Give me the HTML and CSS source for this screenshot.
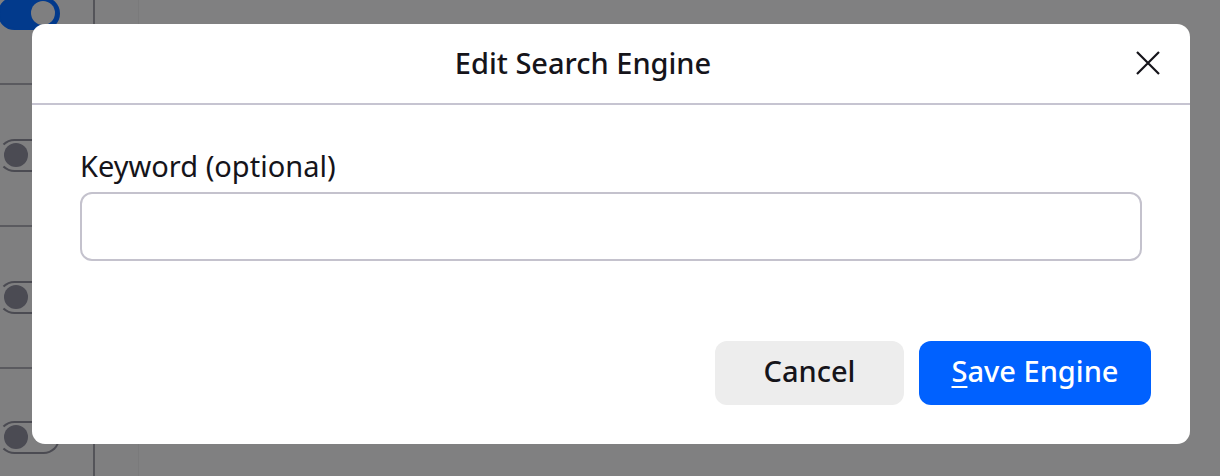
FILE: index.html
```html
<!DOCTYPE html>
<html>
<head>
<meta charset="utf-8">
<link rel="stylesheet" href="styles.css">
</head>
<body>
<div class="page">
  <div class="toggles">
    <div class="row"><span class="toggle on"><span class="knob"></span></span></div>
    <div class="row"><span class="toggle"><span class="knob"></span></span></div>
    <div class="row"><span class="toggle"><span class="knob"></span></span></div>
    <div class="row row-last"><span class="toggle"><span class="knob"></span></span></div>
  </div>
  <div class="col-mid"></div>
  <div class="col-rest"></div>
</div>
<div class="dialog">
  <div class="dialog-header">
    <h1 class="title">Edit Search Engine</h1>
    <button class="close" aria-label="Close">
      <svg width="24" height="24" viewBox="0 0 24 24"><path d="M1 1 L23 23 M23 1 L1 23" stroke="#15141a" stroke-width="2.2" fill="none"/></svg>
    </button>
  </div>
  <div class="dialog-body">
    <label class="label">Keyword (optional)</label>
    <div class="input"></div>
  </div>
  <div class="dialog-footer">
    <button class="btn btn-cancel">Cancel</button>
    <button class="btn btn-save"><u>S</u>ave Engine</button>
  </div>
</div>
</body>
</html>
```
FILE: styles.css
```css
html, body {
  margin: 0;
  padding: 0;
  width: 1220px;
  height: 476px;
  overflow: hidden;
  background: #7f7f80;
  font-family: "Noto Sans", "Open Sans", sans-serif;
  color: #15141a;
}
.page {
  display: flex;
  height: 476px;
  overflow: hidden;
}
.toggles {
  width: 93px;
  border-right: 2px solid #545459;
  display: flex;
  flex-direction: column;
  margin-top: -57px;
}
.row {
  height: 140px;
  flex-shrink: 0;
  border-bottom: 2px solid #5a5a5f;
  display: flex;
  align-items: center;
}
.row-last { border-bottom: none; height: 136px; }
.toggle {
  display: flex;
  align-items: center;
  width: 58px;
  height: 29px;
  border: 2px solid #4b4b52;
  border-radius: 17px;
  border-left-color: transparent;
  position: relative;
  left: -2px;
}
.toggle .knob {
  width: 24px;
  height: 24px;
  border-radius: 50%;
  background: #4b4b53;
  margin-left: 4px;
}
.toggle.on {
  background: #023a8c;
  border-color: #023a8c;
  justify-content: flex-end;
}
.toggle.on .knob {
  background: #7f7f80;
  margin-left: 0;
  margin-right: 3px;
}
.col-mid {
  width: 43px;
}
.col-rest {
  flex: 1;
  border-left: 1px solid #7a7a7b;
  background: #808081;
}
.dialog {
  position: absolute;
  left: 32px;
  top: 24px;
  width: 1158px;
  height: 420px;
  background: #fff;
  border-radius: 13px;
  display: flex;
  flex-direction: column;
  box-sizing: border-box;
}
.dialog-header {
  height: 81px;
  box-sizing: border-box;
  border-bottom: 2px solid #c6c4d1;
  display: flex;
  align-items: center;
  padding-right: 28px;
}
.title {
  flex: 1;
  text-align: center;
  margin: 0 0 2px 0;
  font-size: 29px;
  font-weight: 500;
}
.close {
  width: 28px;
  height: 28px;
  padding: 0;
  border: none;
  background: none;
  display: flex;
  align-items: center;
  justify-content: center;
  margin-bottom: 2px;
}
.dialog-body {
  padding: 42px 48px 0 48px;
  display: flex;
  flex-direction: column;
}
.label {
  font-size: 29px;
  line-height: 38px;
  font-weight: 400;
  margin-bottom: 7px;
}
.input {
  height: 69px;
  box-sizing: border-box;
  border: 2px solid #c4c2cd;
  border-radius: 12px;
}
.dialog-footer {
  margin-top: auto;
  padding: 0 39px 39px 0;
  display: flex;
  justify-content: flex-end;
  gap: 15px;
}
.btn {
  height: 64px;
  border: none;
  border-radius: 12px;
  font-family: inherit;
  font-size: 29px;
  font-weight: 500;
  padding: 0 0 5px 0;
}
.btn-cancel {
  width: 189px;
  background: #ededed;
  color: #15141a;
}
.btn-save {
  width: 232px;
  background: #0061ff;
  color: #fff;
}
.btn-save u {
  text-decoration-thickness: 2px;
  text-underline-offset: 4px;
}
```
